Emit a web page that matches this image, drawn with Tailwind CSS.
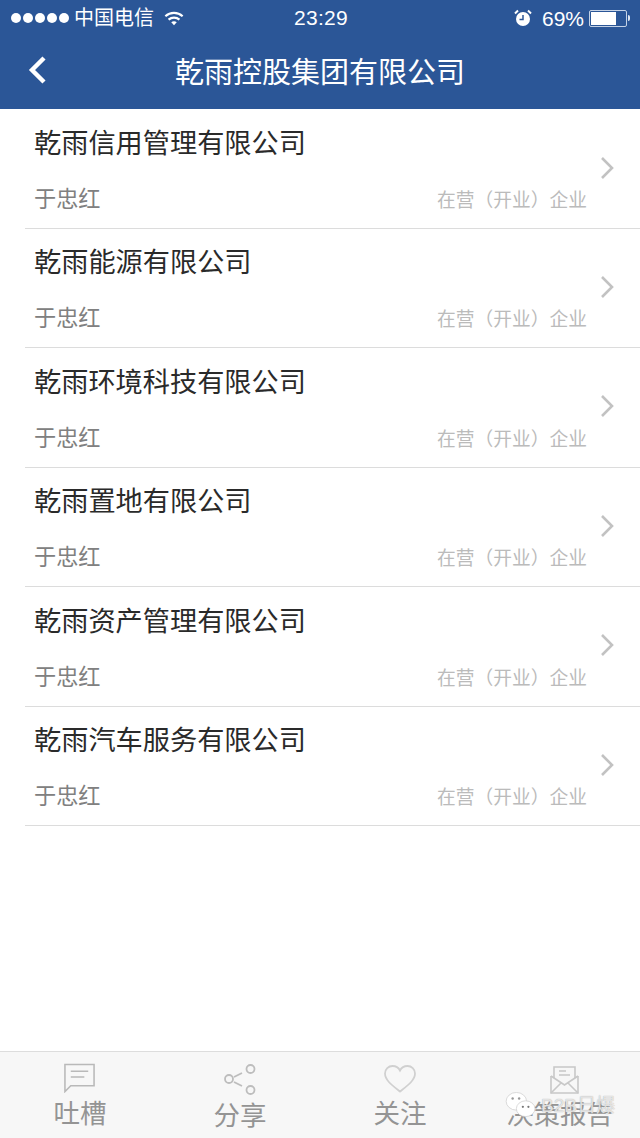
<!DOCTYPE html>
<html lang="zh-CN">
<head>
  <meta charset="UTF-8">
  <meta name="viewport" content="width=device-width, initial-scale=1.0">
  <script src="https://cdn.jsdelivr.net/npm/@tailwindcss/browser@4"></script>
  <title>乾雨控股集团有限公司</title>
</head>
<body class="bg-white font-['Liberation_Sans','Noto_Sans_CJK_SC',sans-serif]">
  <div class="relative w-[640px] h-[1138px] flex flex-col overflow-hidden">
    <!-- status bar + title -->
    <header class="h-[109px] bg-[#2b5697] text-white shrink-0">
      <div class="h-[36px] flex items-center justify-between pl-[11px] pr-[10px] text-[21px] relative">
        <div class="flex items-center">
          <div class="flex gap-[2px]">
            <span class="w-[10px] h-[10px] rounded-full bg-white"></span>
            <span class="w-[10px] h-[10px] rounded-full bg-white"></span>
            <span class="w-[10px] h-[10px] rounded-full bg-white"></span>
            <span class="w-[10px] h-[10px] rounded-full bg-white"></span>
            <span class="w-[10px] h-[10px] rounded-full bg-white"></span>
          </div>
          <span class="ml-[5px] text-[20px] leading-none">中国电信</span>
          <svg class="ml-[10px] w-[20px] h-[15px]" viewBox="0 0 22 16" fill="none" stroke="white" stroke-width="2.4">
            <path d="M1.500 5.500c5.400-4.800 13.600-4.800 19 0"/>
            <path d="M5 9.200c3.500-3 8.500-3 12 0"/>
            <path d="M11 15.500l-3-3.400c1.800-1.300 4.200-1.300 6 0z" fill="white" stroke="none"/>
          </svg>
        </div>
        <span class="absolute left-[294px] top-[5px] text-[21px] font-medium leading-[26px] tracking-[0.3px]">23:29</span>
        <div class="flex items-center">
          <svg class="w-[18px] h-[18px]" viewBox="0 0 18 18">
            <circle cx="9" cy="10" r="7" fill="white"/>
            <path d="M1 4.500 4 1.500M17 4.500 14 1.500" stroke="white" stroke-width="2"/>
            <path d="M9 6v4.500H5.500" fill="none" stroke="#2b5697" stroke-width="1.500"/>
          </svg>
          <span class="ml-[10px] text-[21px] leading-none">69%</span>
          <div class="ml-[5px] w-[38px] h-[17px] border border-[#c4d2e6] rounded-[2px] p-[1px]">
            <div class="w-[25px] h-full bg-white"></div>
          </div>
          <span class="ml-[1px] w-[2px] h-[6px] bg-[#dfe7f2] rounded-r-sm"></span>
        </div>
      </div>
      <div class="relative h-[73px] flex items-center justify-center">
        <svg class="absolute left-[27px] top-[19px] w-[20px] h-[30px]" viewBox="0 0 20 30" fill="none" stroke="white" stroke-width="4.400">
          <path d="M17 3 5 15l12 12"/>
        </svg>
        <h1 class="text-[29px] leading-none relative top-[1px]">乾雨控股集团有限公司</h1>
      </div>
    </header>

    <ul class="flex-1 pl-[25px] pt-[0.6px]">
      <li class="h-[119.4px] border-b border-[#dcdcdc] pl-[9px] relative">
        <p class="pt-[17.500px] text-[27.2px] leading-[34px] text-[#2a2a2a]">乾雨信用管理有限公司</p>
        <div class="mt-[27px] flex justify-between items-center pr-[53px]">
          <span class="text-[22.2px] leading-[24px] text-[#808080]">于忠红</span>
          <span class="relative top-[1px] text-[18.75px] leading-[24px] text-[#bbbbbb]">在营（开业）企业</span>
        </div>
        <svg class="absolute right-[24px] top-[46px] w-[16px] h-[26px]" viewBox="0 0 16 26" fill="none" stroke="#c2c2c2" stroke-width="2.600"><path d="M2 2l10 10L2 22"/></svg>
      </li>
      <li class="h-[119.4px] border-b border-[#dcdcdc] pl-[9px] relative">
        <p class="pt-[17.500px] text-[27.2px] leading-[34px] text-[#2a2a2a]">乾雨能源有限公司</p>
        <div class="mt-[27px] flex justify-between items-center pr-[53px]">
          <span class="text-[22.2px] leading-[24px] text-[#808080]">于忠红</span>
          <span class="relative top-[1px] text-[18.75px] leading-[24px] text-[#bbbbbb]">在营（开业）企业</span>
        </div>
        <svg class="absolute right-[24px] top-[46px] w-[16px] h-[26px]" viewBox="0 0 16 26" fill="none" stroke="#c2c2c2" stroke-width="2.600"><path d="M2 2l10 10L2 22"/></svg>
      </li>
      <li class="h-[119.4px] border-b border-[#dcdcdc] pl-[9px] relative">
        <p class="pt-[17.500px] text-[27.2px] leading-[34px] text-[#2a2a2a]">乾雨环境科技有限公司</p>
        <div class="mt-[27px] flex justify-between items-center pr-[53px]">
          <span class="text-[22.2px] leading-[24px] text-[#808080]">于忠红</span>
          <span class="relative top-[1px] text-[18.75px] leading-[24px] text-[#bbbbbb]">在营（开业）企业</span>
        </div>
        <svg class="absolute right-[24px] top-[46px] w-[16px] h-[26px]" viewBox="0 0 16 26" fill="none" stroke="#c2c2c2" stroke-width="2.600"><path d="M2 2l10 10L2 22"/></svg>
      </li>
      <li class="h-[119.4px] border-b border-[#dcdcdc] pl-[9px] relative">
        <p class="pt-[17.500px] text-[27.2px] leading-[34px] text-[#2a2a2a]">乾雨置地有限公司</p>
        <div class="mt-[27px] flex justify-between items-center pr-[53px]">
          <span class="text-[22.2px] leading-[24px] text-[#808080]">于忠红</span>
          <span class="relative top-[1px] text-[18.75px] leading-[24px] text-[#bbbbbb]">在营（开业）企业</span>
        </div>
        <svg class="absolute right-[24px] top-[46px] w-[16px] h-[26px]" viewBox="0 0 16 26" fill="none" stroke="#c2c2c2" stroke-width="2.600"><path d="M2 2l10 10L2 22"/></svg>
      </li>
      <li class="h-[119.4px] border-b border-[#dcdcdc] pl-[9px] relative">
        <p class="pt-[17.500px] text-[27.2px] leading-[34px] text-[#2a2a2a]">乾雨资产管理有限公司</p>
        <div class="mt-[27px] flex justify-between items-center pr-[53px]">
          <span class="text-[22.2px] leading-[24px] text-[#808080]">于忠红</span>
          <span class="relative top-[1px] text-[18.75px] leading-[24px] text-[#bbbbbb]">在营（开业）企业</span>
        </div>
        <svg class="absolute right-[24px] top-[46px] w-[16px] h-[26px]" viewBox="0 0 16 26" fill="none" stroke="#c2c2c2" stroke-width="2.600"><path d="M2 2l10 10L2 22"/></svg>
      </li>
      <li class="h-[119.4px] border-b border-[#dcdcdc] pl-[9px] relative">
        <p class="pt-[17.500px] text-[27.2px] leading-[34px] text-[#2a2a2a]">乾雨汽车服务有限公司</p>
        <div class="mt-[27px] flex justify-between items-center pr-[53px]">
          <span class="text-[22.2px] leading-[24px] text-[#808080]">于忠红</span>
          <span class="relative top-[1px] text-[18.75px] leading-[24px] text-[#bbbbbb]">在营（开业）企业</span>
        </div>
        <svg class="absolute right-[24px] top-[46px] w-[16px] h-[26px]" viewBox="0 0 16 26" fill="none" stroke="#c2c2c2" stroke-width="2.600"><path d="M2 2l10 10L2 22"/></svg>
      </li>
    </ul>

    <!-- bottom tabs -->
    <nav class="h-[87px] shrink-0 bg-[#f7f7f7] border-t border-[#dddddd] grid grid-cols-4 text-[#949494] text-[26.500px] text-center">
      <div class="flex flex-col items-center">
        <svg class="mt-[11px] mr-[1px] w-[33px] h-[30px]" viewBox="0 0 34 30" fill="none" stroke="#b9b9b9" stroke-width="1.600">
          <path d="M2 1h30v22H8l-6 6z"/><path d="M8 8h18M8 14h14"/>
        </svg>
        <span class="leading-[32px] mt-[5px]">吐槽</span>
      </div>
      <div class="flex flex-col items-center">
        <svg class="mt-[12px] w-[34px] h-[32px]" viewBox="0 0 34 32" fill="none" stroke="#bdbdbd" stroke-width="1.800">
          <circle cx="6" cy="15" r="4"/><circle cx="27.500" cy="5" r="4"/><circle cx="27.500" cy="26" r="4"/>
          <path d="M11 13l8-4M11 18l8 4"/>
        </svg>
        <span class="leading-[32px] mt-[4px]">分享</span>
      </div>
      <div class="flex flex-col items-center">
        <svg class="mt-[13px] w-[32px] h-[28px]" viewBox="0 0 32 28" fill="none" stroke="#d0d0d0" stroke-width="1.800">
          <path d="M16 26.500C9 21 1 15.500 1 8.500 1 4 4.500 1 8.500 1 11.500 1 14.500 2.500 16 5.500 17.500 2.500 20.500 1 23.500 1 27.500 1 31 4 31 8.500 31 15.500 23 21 16 26.500Z"/>
        </svg>
        <span class="leading-[32px] mt-[5px]">关注</span>
      </div>
      <div class="flex flex-col items-center">
        <svg class="mt-[14px] ml-[8px] w-[29px] h-[28px]" viewBox="0 0 29 28" fill="none" stroke="#c8c8c8" stroke-width="1.600">
          <path d="M1 10v17h27V10"/><path d="M4 12V1h21v11"/><path d="M1 10l13.500 9L28 10M1 27l10-10M28 27 18 17"/><path d="M9 5h7M9 9h11"/>
        </svg>
        <span class="leading-[32px] mt-[5px]">决策报告</span>
      </div>
    </nav>

    <!-- image watermark -->
    <div class="absolute left-[505px] top-[1092px] flex items-center">
      <svg class="w-[32px] h-[26px]" viewBox="0 0 34 28">
        <ellipse cx="12" cy="10" rx="11" ry="9.500" fill="#fff" stroke="#cfcfcf" stroke-width="0.800"/>
        <ellipse cx="22" cy="18" rx="10" ry="8.500" fill="#fff" stroke="#cfcfcf" stroke-width="0.800"/>
        <circle cx="8" cy="7" r="1.300" fill="#999"/><circle cx="15" cy="7" r="1.300" fill="#999"/>
        <circle cx="19" cy="16" r="1.200" fill="#777"/><circle cx="25" cy="16" r="1.200" fill="#777"/>
      </svg>
      <span class="ml-[4px] text-[19px] leading-none text-[#ffffff]/70 [text-shadow:0_0_1px_#999]">B2B日爆</span>
    </div>
  </div>
</body>
</html>
